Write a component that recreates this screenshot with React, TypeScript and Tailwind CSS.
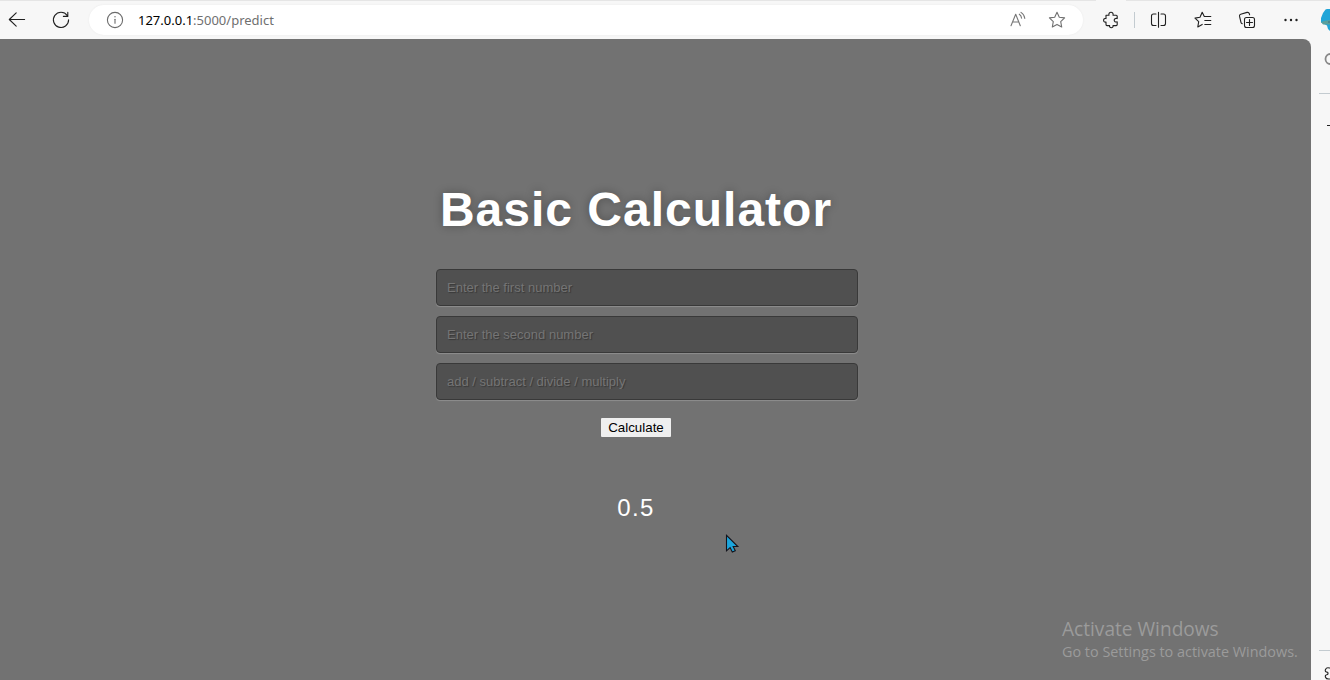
import type { ReactNode } from 'react';

function Icon({ children, className = 'text-[#202020]' }: { children: ReactNode; className?: string }) {
  return (
    <svg width="20" height="20" viewBox="0 0 20 20" fill="none" stroke="currentColor" strokeWidth="1.1" strokeLinecap="round" strokeLinejoin="round" className={`block shrink-0 ${className}`}>
      {children}
    </svg>
  );
}

const PUZZLE = 'M5 5.2H8C7.4 3.4 8.6 2.3 10 2.3S12.6 3.4 12 5.2H15.2Q16.2 5.2 16.2 6.2V8.6C14.3 8 13.2 9 13.2 10.2S14.3 12.4 16.2 11.8V14.6Q16.2 15.6 15.2 15.6H12C12.4 17 11.4 17.7 10.3 17.7S8.2 17 8.6 15.6H6Q5 15.6 5 14.6V12C3.6 12.5 2.6 11.6 2.6 10.3S3.6 8.1 5 8.6Z';

function AddressBar() {
  return (
    <div className="ml-[18px] flex h-[30px] w-[994px] shrink-0 items-center rounded-full bg-white pr-4 pl-4 shadow-[0_0_2px_#e8e8e8]">
      <Icon className="text-[#6b6b6b]">
        <circle cx="10" cy="10" r="7.6" />
        <path d="M10 9.3v4" />
        <path d="M10 6.7v.1" strokeWidth="1.4" />
      </Icon>
      <div className="ml-[13px] text-[13px] leading-5 whitespace-nowrap text-[#6f6f6f]">
        <span className="text-black">127.0.0.1</span>:5000/predict
      </div>
      <div className="ml-auto flex items-center gap-[18px]">
        <Icon className="text-[#777777]">
          <path d="M2 15.7 6.7 4.2l4.6 11.5M3.8 12h5.8M10.3 4.2q2 1.3 2.3 4M12 2.4q3.3 2 3.8 6.1" />
        </Icon>
        <Icon className="text-[#707070]">
          <path d="m10 2.3 2.3 4.9 5.3.7-3.9 3.7 1 5.4-4.7-2.6-4.7 2.6 1-5.4-3.9-3.7 5.3-.7Z" />
        </Icon>
      </div>
    </div>
  );
}

function Toolbar() {
  return (
    <header className="h-[39px] shrink-0 overflow-hidden bg-[#f7f7f7]">
      <div className="flex h-px">
        <div className="w-[1096px] bg-[#e5e5e5]" />
        <div className="w-[30px]" />
        <div className="flex-1 bg-[#e5e5e5]" />
      </div>
      <div className="flex h-[38px] w-[1360px] items-center pl-[7px]">
        <Icon>
          <path d="M17.6 9.5H2.5M9.2 2.8 2.3 9.5l6.9 6.7" />
        </Icon>
        <Icon className="ml-6 text-[#202020]">
          <path d="M16.2 5.5A7.6 7.6 0 1 0 17.6 9.8M16.8 2.2v4.2h-4.4" />
        </Icon>
        <AddressBar />
        <Icon className="ml-[18px] text-[#202020]">
          <path d={PUZZLE} />
        </Icon>
        <div className="ml-[13px] h-4 w-px shrink-0 bg-[#c3cbd0]" />
        <Icon className="ml-[13px] text-[#202020]">
          <path d="M8 4H5.5q-2 0-2 2v7.5q0 2 2 2H8M13 4h2.5q2 0 2 2v7.5q0 2-2 2H13M10.5 2.3v15" />
        </Icon>
        <Icon className="ml-[25px] text-[#202020]">
          <path d="M11.3 6.5 9.2 2.2 7 7.2l-5 .9 3.7 3.6-.9 5.2 4.4-2.5M11.8 6.5h6M11.8 10.5h6M11.8 14.5h6" />
        </Icon>
        <Icon className="ml-6 text-[#202020]">
          <rect x="7.5" y="7.5" width="10" height="10" rx="2" />
          <path d="M12.5 9.5v6M9.5 12.5h6M5.3 13.7q-1-.3-1.3-1.2L2.5 6.2q-.3-1.5 1.2-2L10 2.4q1.8-.4 2.3 1.2l.3 1.2" />
        </Icon>
        <Icon className="ml-6 text-[#202020]">
          <g fill="currentColor" stroke="none">
            <circle cx="4.5" cy="10" r="1.2" />
            <circle cx="10" cy="10" r="1.2" />
            <circle cx="15.5" cy="10" r="1.2" />
          </g>
        </Icon>
        <svg width="24" height="24" viewBox="0 0 24 24" className="ml-5 block shrink-0">
          <path d="M4.5 1.5 6 1h6v22H9L7 21 6 17.5 0 14.5V10L2 5Z" fill="#20a5d8" />
          <path d="M0 14q4-2 12-2v4.5H2Z" fill="#5b9f9c" />
          <path d="M7 14h5" stroke="#3d6d82" />
        </svg>
      </div>
    </header>
  );
}

function SideRail() {
  return (
    <aside className="flex w-[19px] shrink-0 flex-col overflow-hidden bg-[#f7f7f7] pl-2">
      <svg width="20" height="14" viewBox="0 0 20 14" className="mt-[13px] shrink-0" fill="none">
        <circle cx="11.5" cy="7" r="5" stroke="#888" strokeWidth="1.8" />
      </svg>
      <div className="mt-[27px] h-px shrink-0 bg-[#c3cbd0]" />
      <div className="mt-[31px] ml-2 h-px w-4 shrink-0 bg-[#222]" />
      <div className="mt-auto h-px shrink-0 bg-[#c3cbd0]" />
      <div className="h-[29px] shrink-0 pt-3 pl-1">
        <Icon>
          <path d="M6.5 5Q3.5 4 2.5 6.5T4.5 9.2Q5.5 10.5 4.5 11.5 1.7 12 2.5 14.2T6.5 16M6.5 5 8 4.8" />
        </Icon>
      </div>
    </aside>
  );
}

const FIELDS = ['Enter the first number', 'Enter the second number', 'add / subtract / divide / multiply'];

function Calculator() {
  return (
    <form className="flex w-[400px] flex-col items-center pt-[142px]" onSubmit={(e) => e.preventDefault()}>
      <h1 className="h-[58px] text-[48px] leading-[58px] font-bold tracking-[1px] whitespace-nowrap text-white [text-shadow:0_0_10px_rgba(0,0,0,0.3)]">
        Basic Calculator
      </h1>
      <div className="mt-[30px] flex w-full flex-col gap-2.5">
        {FIELDS.map((label) => (
          <input
            key={label}
            placeholder={label}
            className="h-[37px] w-[422px] rounded border border-[#393939] bg-[#505050] px-2.5 text-[13px] text-white shadow-[0_1px_1px_rgba(255,255,255,0.2)] outline-none [text-shadow:1px_1px_1px_rgba(0,0,0,0.3)] placeholder:text-[#757575]"
          />
        ))}
      </div>
      <button className="mt-[18px] h-[19px] w-[70px] rounded-[1px] bg-[#efefef] text-[13.333px] leading-[19px] text-black">Calculate</button>
      <output className="mt-[57px] text-[24px] leading-7 tracking-[1.3px] text-white">0.5</output>
    </form>
  );
}

export default function App() {
  return (
    <div className="relative flex h-[680px] w-[1330px] flex-col overflow-hidden bg-[#f7f7f7] font-['Noto_Sans','Open_Sans',sans-serif]">
      <Toolbar />
      <div className="flex min-h-0 flex-1">
        <main className="flex w-[1311px] shrink-0 justify-center rounded-tr-lg bg-[#727272] pr-[39px] font-['Liberation_Sans',Arial,sans-serif]">
          <Calculator />
        </main>
        <SideRail />
      </div>
      <div className="absolute top-[616px] left-[1062px] font-['Open_Sans','Noto_Sans',sans-serif] whitespace-nowrap text-[#9b9b9b]">
        <div className="text-[19.1px] leading-[26px]">Activate Windows</div>
        <div className="text-[14.4px] leading-5">Go to Settings to activate Windows.</div>
      </div>
      <svg width="15" height="20" viewBox="0 0 15 20" className="absolute top-[534px] left-[725px]">
        <path d="M1.5 1.3v15.5l3.6-3.2 2.2 4.5 3-1.4-2.1-4.2h4.6Z" fill="#1ca5dc" stroke="#14141c" strokeWidth="1.1" />
      </svg>
    </div>
  );
}
